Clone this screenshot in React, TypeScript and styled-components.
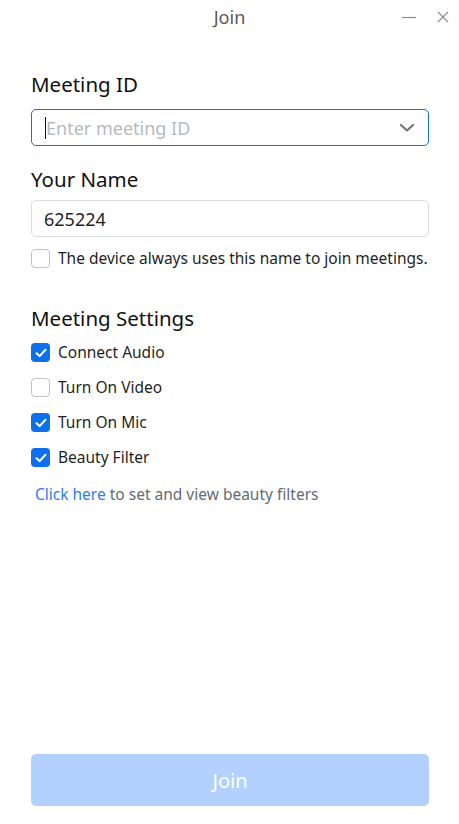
import React from "react";
import { styled, createGlobalStyle } from "styled-components";

const GlobalStyle = createGlobalStyle`
  html, body {
    margin: 0;
    padding: 0;
    background: #ffffff;
  }
  body {
    font-family: "Noto Sans", "Open Sans", sans-serif;
    color: #1f1f1f;
  }
`;

const settings = [
  { label: "Connect Audio", checked: true },
  { label: "Turn On Video", checked: false },
  { label: "Turn On Mic", checked: true },
  { label: "Beauty Filter", checked: true },
];

const Check = ({ checked }: { checked: boolean }) => (
  <Box checked={checked}>
    {checked && (
      <svg width="12" height="10" viewBox="0 0 12 10" fill="none">
        <path
          d="M1.5 5.2 L4.6 8.1 L10.5 1.8"
          stroke="#fff"
          strokeWidth="2"
          strokeLinecap="round"
          strokeLinejoin="round"
        />
      </svg>
    )}
  </Box>
);

const App = () => {
  return (
    <>
      <GlobalStyle />
      <Window>
        <TitleBar>
          <Title>Join</Title>
          <WinButtons>
            <svg width="16" height="16" viewBox="0 0 16 16">
              <line x1="1" y1="8.5" x2="15" y2="8.5" stroke="#8a8f96" strokeWidth="1.2" />
            </svg>
            <svg width="16" height="16" viewBox="0 0 16 16">
              <path d="M3 3 L13 13 M13 3 L3 13" stroke="#8a8f96" strokeWidth="1.2" />
            </svg>
          </WinButtons>
        </TitleBar>

        <Content>
          <Label top={38} bottom={13}>
            Meeting ID
          </Label>
          <Field focused>
            <Caret />
            <Placeholder>Enter meeting ID</Placeholder>
            <svg width="16" height="10" viewBox="0 0 16 10">
              <path
                d="M2 2 L8 7.5 L14 2"
                fill="none"
                stroke="#6e7680"
                strokeWidth="2.2"
                strokeLinecap="round"
                strokeLinejoin="round"
              />
            </svg>
          </Field>

          <Label top={21} bottom={9}>
            Your Name
          </Label>
          <Field>
            <Value>625224</Value>
          </Field>
          <CheckRow top={12}>
            <Check checked={false} />
            <CheckText>The device always uses this name to join meetings.</CheckText>
          </CheckRow>

          <Label top={38} bottom={13}>
            Meeting Settings
          </Label>
          <SettingList>
            {settings.map((s) => (
              <CheckRow key={s.label}>
                <Check checked={s.checked} />
                <CheckText>{s.label}</CheckText>
              </CheckRow>
            ))}
          </SettingList>

          <Hint>
            <Link>Click here</Link> to set and view beauty filters
          </Hint>

          <JoinButton disabled>Join</JoinButton>
        </Content>
      </Window>
    </>
  );
};

export default App;

const Window = styled.div`
  display: flex;
  flex-direction: column;
  height: 100vh;
  box-sizing: border-box;
`;

const TitleBar = styled.div`
  position: relative;
  height: 34px;
  display: flex;
  align-items: center;
  justify-content: center;
`;

const Title = styled.div`
  font-size: 18px;
  color: #555a61;
`;

const WinButtons = styled.div`
  position: absolute;
  right: 8px;
  top: 9px;
  display: flex;
  gap: 18px;
`;

const Content = styled.div`
  flex: 1;
  display: flex;
  flex-direction: column;
  padding: 0 30px 18px 31px;
`;

const Label = styled.div<{ top: number; bottom: number }>`
  margin-top: ${({ top }) => top}px;
  margin-bottom: ${({ bottom }) => bottom}px;
  font-size: 20.5px;
  line-height: 24px;
  color: #111;
`;

const Field = styled.div<{ focused?: boolean }>`
  height: 37px;
  box-sizing: border-box;
  border: 1px solid ${({ focused }) => (focused ? "#0e71eb" : "#d9dce0")};
  border-radius: 5px;
  display: flex;
  align-items: center;
  padding: 0 13px 0 12px;
`;

const Caret = styled.span`
  width: 1px;
  height: 22px;
  background: #111;
  margin-left: 1px;
`;

const Placeholder = styled.span`
  flex: 1;
  font-size: 18px;
  color: #b6bac0;
`;

const Value = styled.span`
  font-size: 18px;
  color: #1f1f1f;
`;

const CheckRow = styled.div<{ top?: number }>`
  display: flex;
  align-items: center;
  gap: 8px;
  height: 19px;
  margin-top: ${({ top }) => top ?? 0}px;
`;

const Box = styled.span<{ checked: boolean }>`
  width: 19px;
  height: 19px;
  box-sizing: border-box;
  border-radius: 4px;
  display: flex;
  align-items: center;
  justify-content: center;
  background: ${({ checked }) => (checked ? "#0e71eb" : "#fff")};
  border: ${({ checked }) => (checked ? "none" : "1px solid #bfc3c9")};
  flex-shrink: 0;
`;

const CheckText = styled.span`
  font-size: 15.5px;
  line-height: 19px;
  color: #1f1f1f;
  white-space: nowrap;
`;

const SettingList = styled.div`
  display: flex;
  flex-direction: column;
  gap: 16px;
`;

const Hint = styled.div`
  margin-top: 17px;
  padding-left: 4px;
  font-size: 15.5px;
  line-height: 20px;
  color: #666b72;
`;

const Link = styled.span`
  color: #2d7cf6;
`;

const JoinButton = styled.button`
  margin-top: auto;
  height: 52px;
  border: none;
  border-radius: 5px;
  background: #b3d1fe;
  color: #fff;
  font-family: inherit;
  font-size: 20px;
`;
